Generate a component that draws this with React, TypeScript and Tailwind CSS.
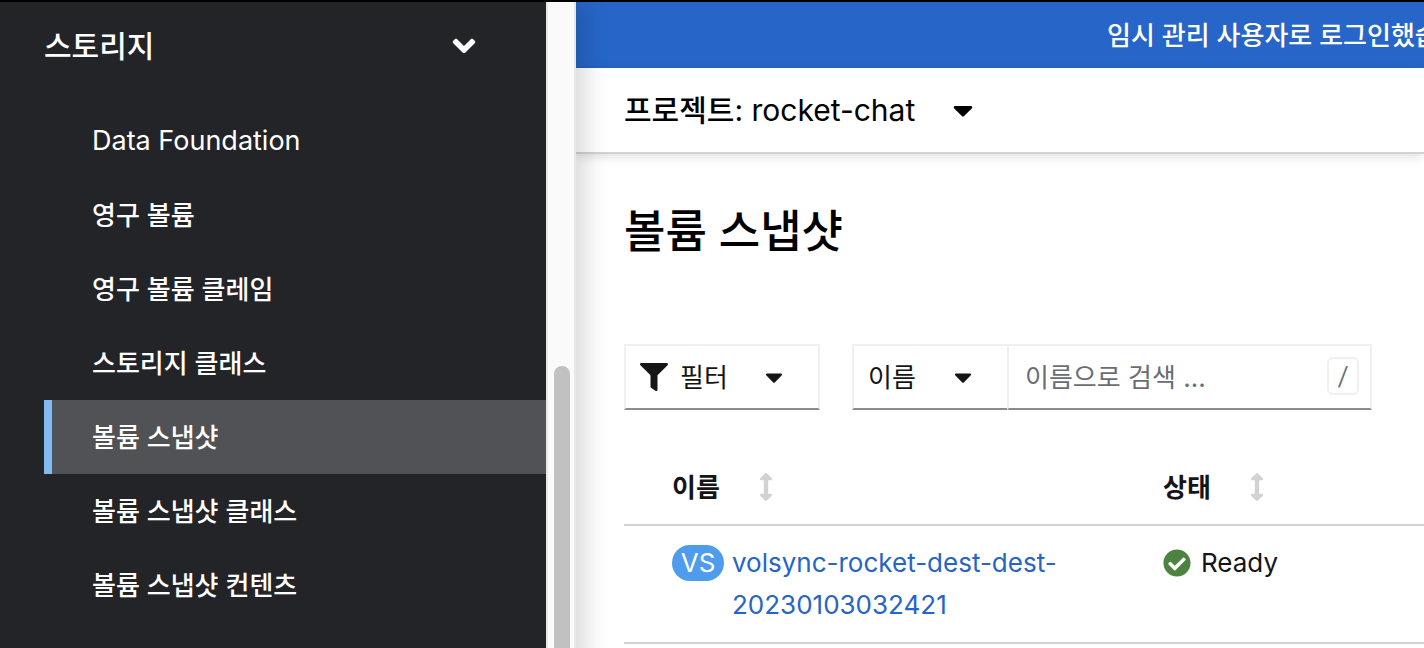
import { FaAngleDown, FaArrowsAltV, FaCaretDown, FaCheckCircle, FaFilter } from "react-icons/fa";

const navItems = [
  "Data Foundation",
  "영구 볼륨",
  "영구 볼륨 클레임",
  "스토리지 클래스",
  "볼륨 스냅샷",
  "볼륨 스냅샷 클래스",
  "볼륨 스냅샷 컨텐츠",
];

const activeItem = "볼륨 스냅샷";

function Sidebar() {
  return (
    <aside className="relative z-10 -mb-6 flex shrink-0 shadow-[8px_0_24px_rgba(0,0,0,0.16)]">
      <nav aria-label="스토리지" className="w-[546px] bg-[#232428] pl-11 text-white">
        <button
          type="button"
          aria-expanded="true"
          className="flex h-[88px] w-full items-center justify-between pr-16 text-left text-[30px] font-medium"
        >
          <span>스토리지</span>
          <FaAngleDown className="size-9" aria-hidden="true" />
        </button>
        <ul className="pt-3.5">
          {navItems.map((item) => (
            <li key={item}>
              <a
                href="#"
                aria-current={item === activeItem ? "page" : undefined}
                className={
                  item === activeItem
                    ? "flex h-[74px] items-center border-l-8 border-[#84b9f2] bg-[#515256] pl-10 text-[26px] font-medium"
                    : "flex h-[74px] items-center pl-12 text-[26px] font-medium"
                }
              >
                {item === "Data Foundation" ? <span className="text-[27px] font-normal">{item}</span> : item}
              </a>
            </li>
          ))}
        </ul>
      </nav>
      <div className="flex w-[30px] border-x-2 border-[#e8e8e8] bg-[#fafafa] pt-[364px] pl-1.5">
        <div className="w-4 rounded-t-full bg-[#c1c1c1]" />
      </div>
    </aside>
  );
}

function Toolbar() {
  return (
    <div className="flex h-[66px] gap-8 text-[26px] text-[#151515]">
      <button
        type="button"
        className="flex w-[196px] items-center border-2 border-[#f0f0f0] border-b-[#8a8d90] pl-3.5"
      >
        <FaFilter className="size-7" aria-hidden="true" />
        <span className="ml-3">필터</span>
        <FaCaretDown className="ml-8 size-7" aria-hidden="true" />
      </button>
      <div className="flex">
        <div className="relative flex w-[155px]">
          <select
            aria-label="검색 기준"
            className="w-full appearance-none border-2 border-r-0 border-[#f0f0f0] border-b-[#8a8d90] bg-white pl-3.5"
          >
            <option>이름</option>
          </select>
          <FaCaretDown className="pointer-events-none absolute top-[19px] right-[30px] size-7" aria-hidden="true" />
        </div>
        <div className="relative flex w-[365px]">
          <input
            type="text"
            aria-label="이름으로 검색"
            placeholder="이름으로 검색 ..."
            className="w-full border-2 border-[#f0f0f0] border-b-[#8a8d90] bg-white pl-4 placeholder:text-[#6a6e73]"
          />
          <kbd className="absolute top-[13px] right-[13px] flex h-[38px] w-8 items-center justify-center rounded-md border-2 border-[#f0f0f0] font-['Lato','Noto_Sans_CJK_KR',sans-serif] text-[26px] text-[#6a6e73]">
            /
          </kbd>
        </div>
      </div>
    </div>
  );
}

function SortHeader({ label }: { label: string }) {
  return (
    <button type="button" className="flex h-[74px] items-center gap-8 font-bold">
      {label}
      <FaArrowsAltV className="size-7 text-[#d2d2d2]" aria-hidden="true" />
    </button>
  );
}

function SnapshotTable() {
  return (
    <table className="mt-10 w-full table-fixed border-collapse text-left text-[26px] text-[#151515]">
      <thead>
        <tr className="border-b-2 border-[#d2d2d2]">
          <th scope="col" className="w-[539px] p-0 pl-12">
            <SortHeader label="이름" />
          </th>
          <th scope="col" className="p-0">
            <SortHeader label="상태" />
          </th>
        </tr>
      </thead>
      <tbody>
        <tr className="border-b-2 border-[#d2d2d2] align-top leading-[42px]">
          <td className="py-4 pr-16 pl-12">
            <div className="flex gap-2">
              <span className="mt-[3px] flex h-9 w-[52px] shrink-0 items-center justify-center rounded-full bg-[#4f9bec] text-white">
                VS
              </span>
              <a href="#" className="text-[#2664c6]">
                volsync-rocket-dest-dest-<wbr />20230103032421
              </a>
            </div>
          </td>
          <td className="py-4">
            <span className="flex items-center gap-2.5">
              <FaCheckCircle className="size-7 text-[#4c8340]" aria-hidden="true" />
              Ready
            </span>
          </td>
        </tr>
      </tbody>
    </table>
  );
}

export default function App() {
  return (
    <div className="flex min-h-screen flex-col overflow-hidden bg-white font-['Inter','Noto_Sans_CJK_KR',sans-serif]">
      <div className="relative z-20 h-0.5 shrink-0 bg-black" />
      <div className="flex grow">
        <Sidebar />
        <main className="min-w-0 grow">
          <div className="flex h-[66px] items-center overflow-hidden bg-[#2766c8] pl-[531px] text-[26px] font-medium whitespace-nowrap text-white">
            임시 관리 사용자로 로그인했습니다.
          </div>
          <div className="border-b-2 border-[#d2d2d2] pl-12 shadow-[0_2px_10px_rgba(0,0,0,0.14)]">
            <button type="button" className="flex h-[84px] items-center text-[30px] text-black">
              <span>
                <span className="font-medium">프로젝트</span>: rocket-chat
              </span>
              <FaCaretDown className="ml-8 size-8" aria-hidden="true" />
            </button>
          </div>
          <div className="pl-12">
            <h1 className="mt-12 mb-[82px] text-[45px] leading-[60px] font-medium text-black">볼륨 스냅샷</h1>
            <Toolbar />
            <SnapshotTable />
          </div>
        </main>
      </div>
    </div>
  );
}
